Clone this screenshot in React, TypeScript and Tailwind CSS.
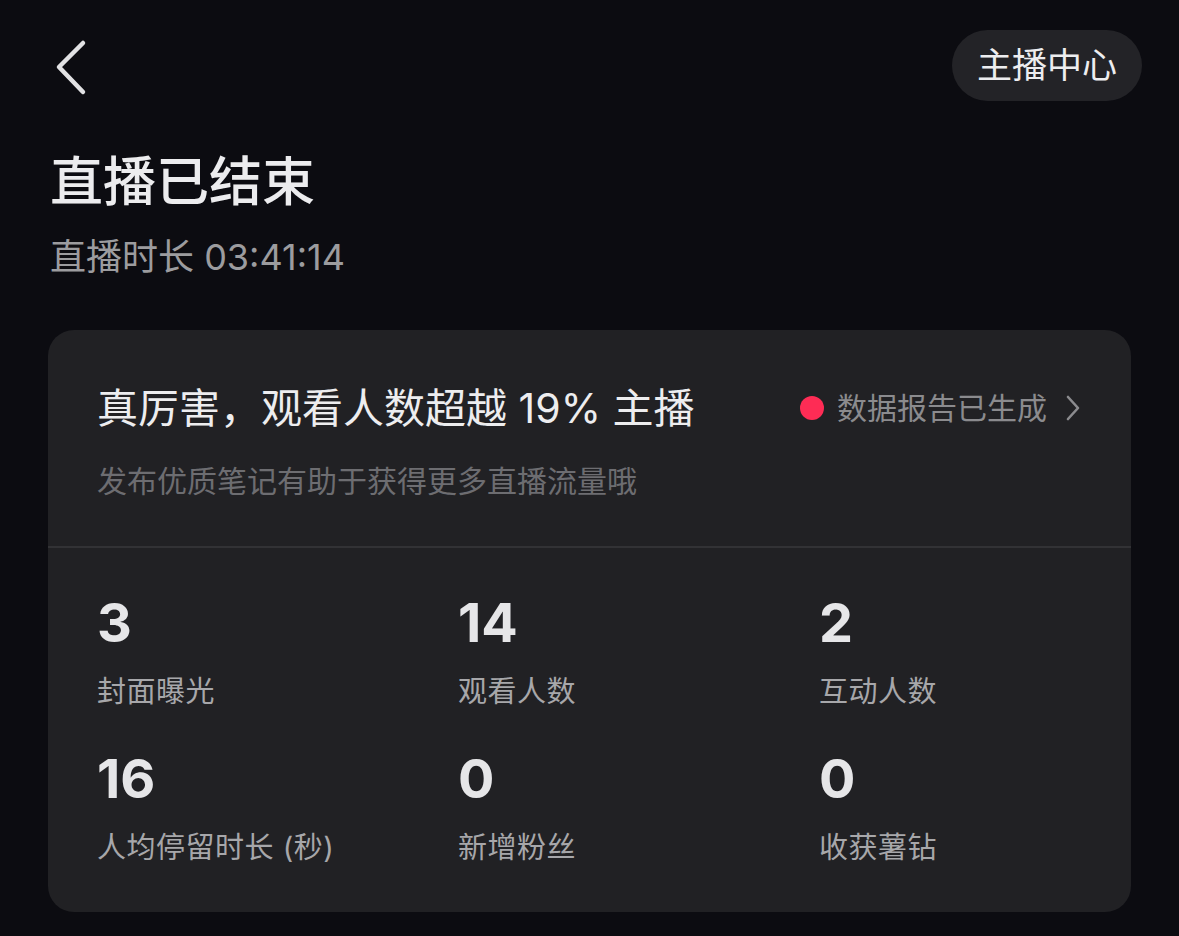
import React from 'react'

const stats = [
  { value: '3', label: '封面曝光' },
  { value: '14', label: '观看人数' },
  { value: '2', label: '互动人数' },
  { value: '16', label: '人均停留时长 (秒)' },
  { value: '0', label: '新增粉丝' },
  { value: '0', label: '收获薯钻' },
]

const font = { fontFamily: 'Inter, "Noto Sans CJK SC", sans-serif' }

function BackIcon() {
  return (
    <svg width="40" height="60" viewBox="0 0 40 60" fill="none">
      <path d="M33 7 L9 31 L33 56" stroke="#e2e2e4" strokeWidth="4.5" strokeLinecap="round" strokeLinejoin="round" />
    </svg>
  )
}

export default function App() {
  return (
    <div className="min-h-[936px] w-full bg-[#0c0c11] text-[#ececee]" style={font}>
      {/* Top bar */}
      <div className="flex items-center justify-between pt-[30px] pl-[50px] pr-[37px]">
        <BackIcon />
        <button className="h-[71px] rounded-full bg-[#232327] px-[25px] text-[35px] leading-none text-[#ededef]">
          主播中心
        </button>
      </div>

      {/* Heading */}
      <div className="px-[50px] pt-[50px]">
        <h1 className="text-[53px] font-medium leading-[62px] text-[#ececee]">直播已结束</h1>
        <p className="mt-[22px] text-[36px] leading-[44px] text-[#9c9c9f]">直播时长 03:41:14</p>
      </div>

      {/* Summary card */}
      <div className="mx-[48px] mt-[51px] rounded-[26px] bg-[#212124]">
        <div className="border-b-2 border-[#323235] px-[49px] pt-[56px] pb-[48px]">
          <div className="flex items-center justify-between">
            <div className="text-[41px] leading-[44px] text-[#ededef]">真厉害，观看人数超越 19% 主播</div>
            <div className="flex items-center pr-[1px]">
              <span className="mr-[13px] h-[24px] w-[24px] rounded-full bg-[#fe2c55]" />
              <span className="text-[30px] leading-none text-[#8b8b8e]">数据报告已生成</span>
              <svg className="ml-[18px]" width="16" height="28" viewBox="0 0 16 28" fill="none">
                <path d="M3 3 L13 14 L3 25" stroke="#8b8b8e" strokeWidth="2.6" strokeLinecap="round" strokeLinejoin="round" />
              </svg>
            </div>
          </div>
          <p className="mt-[34px] text-[30px] leading-[34px] text-[#6d6d71]">发布优质笔记有助于获得更多直播流量哦</p>
        </div>

        <div className="grid grid-cols-[361px_361px_1fr] gap-y-[45px] px-[49px] pt-[48px] pb-[49px]">
          {stats.map((s, i) => (
            <div key={i} className="flex flex-col">
              <span className="text-[54px] font-bold leading-[54px] text-[#e6e6e8]">{s.value}</span>
              <span className="mt-[27px] text-[29px] leading-[30px] tracking-[0.5px] text-[#a7a7aa]">{s.label}</span>
            </div>
          ))}
        </div>
      </div>
    </div>
  )
}
